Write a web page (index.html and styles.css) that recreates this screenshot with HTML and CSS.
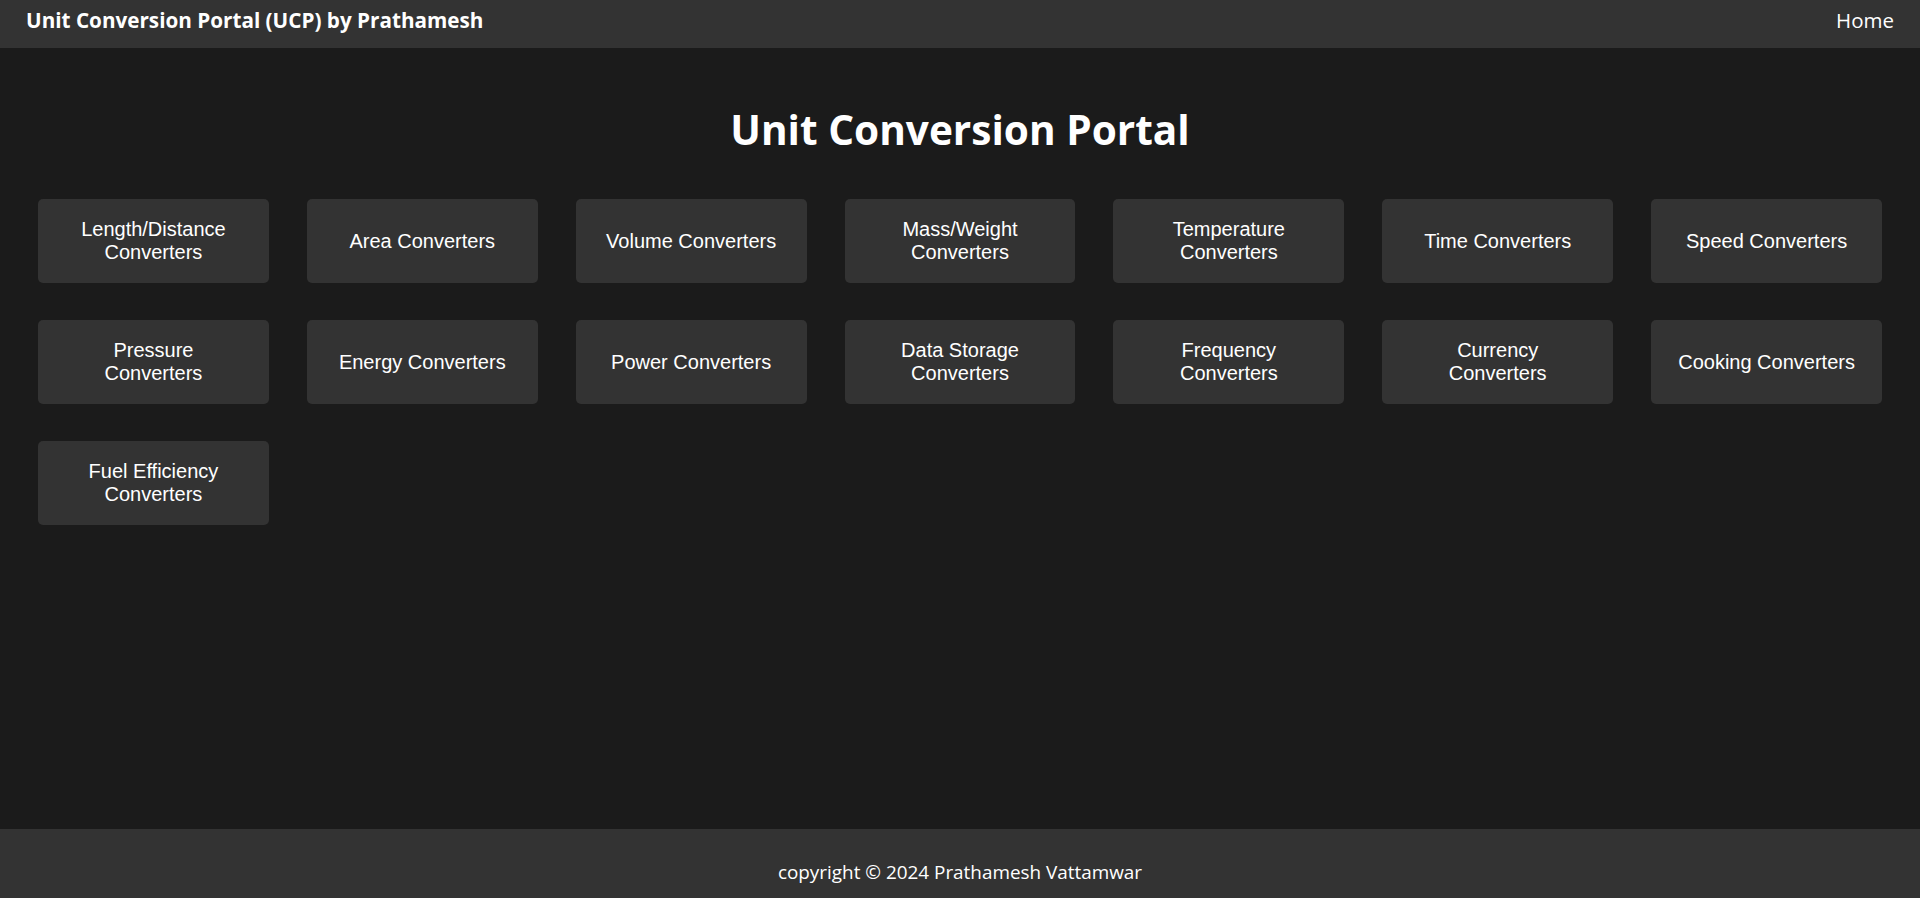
FILE: index.html
```html
<!DOCTYPE html>
<html lang="en">
<head>
<meta charset="UTF-8">
<title>Unit Conversion Portal</title>
<link rel="stylesheet" href="styles.css">
</head>
<body>
<header class="topbar">
  <div class="brand">Unit Conversion Portal (UCP) by Prathamesh</div>
  <nav class="nav"><a href="#" class="nav-link">Home</a></nav>
</header>
<main class="main">
  <h1 class="page-title">Unit Conversion Portal</h1>
  <div class="grid">
    <a href="#" class="card">Length/Distance Converters</a>
    <a href="#" class="card">Area Converters</a>
    <a href="#" class="card">Volume Converters</a>
    <a href="#" class="card">Mass/Weight Converters</a>
    <a href="#" class="card">Temperature Converters</a>
    <a href="#" class="card">Time Converters</a>
    <a href="#" class="card">Speed Converters</a>
    <a href="#" class="card">Pressure Converters</a>
    <a href="#" class="card">Energy Converters</a>
    <a href="#" class="card">Power Converters</a>
    <a href="#" class="card">Data Storage Converters</a>
    <a href="#" class="card">Frequency Converters</a>
    <a href="#" class="card">Currency Converters</a>
    <a href="#" class="card">Cooking Converters</a>
    <a href="#" class="card">Fuel Efficiency Converters</a>
  </div>
</main>
<footer class="footer">
  <p class="copy">copyright © 2024 Prathamesh Vattamwar</p>
</footer>
</body>
</html>
```
FILE: styles.css
```css
* { box-sizing: border-box; }
html, body { margin: 0; padding: 0; }
body {
  background: #1b1b1b;
  color: #ffffff;
  font-family: "Open Sans", "DejaVu Sans", sans-serif;
  min-height: 100vh;
  display: flex;
  flex-direction: column;
}
.topbar {
  height: 48px;
  background: #333333;
  display: flex;
  justify-content: space-between;
  align-items: flex-start;
  padding: 5px 26px 13px 26px;
  line-height: 30px;
}
.brand {
  font-weight: 700;
  font-size: 20.7px;
}
.nav-link {
  color: #ffffff;
  text-decoration: none;
  font-size: 20.5px;
}
.main {
  flex: 1;
  display: flex;
  flex-direction: column;
}
.page-title {
  margin: 55px 0 0 0;
  text-align: center;
  font-size: 40.6px;
  line-height: 54px;
  font-weight: 700;
}
.grid {
  margin-top: 42px;
  padding: 0 38px;
  display: grid;
  grid-template-columns: repeat(7, 1fr);
  column-gap: 38px;
  row-gap: 37px;
}
.card {
  background: #333333;
  color: #ffffff;
  text-decoration: none;
  border-radius: 5px;
  padding: 19px 25px;
  display: flex;
  align-items: center;
  justify-content: center;
  text-align: center;
  font-family: "Liberation Sans", Arial, sans-serif;
  font-size: 20px;
  line-height: 23px;
  min-height: 84px;
}
.footer {
  height: 69px;
  background: #333333;
  padding-top: 31px;
  text-align: center;
}
.copy {
  margin: 0;
  font-size: 18.9px;
  line-height: 24px;
}
```
